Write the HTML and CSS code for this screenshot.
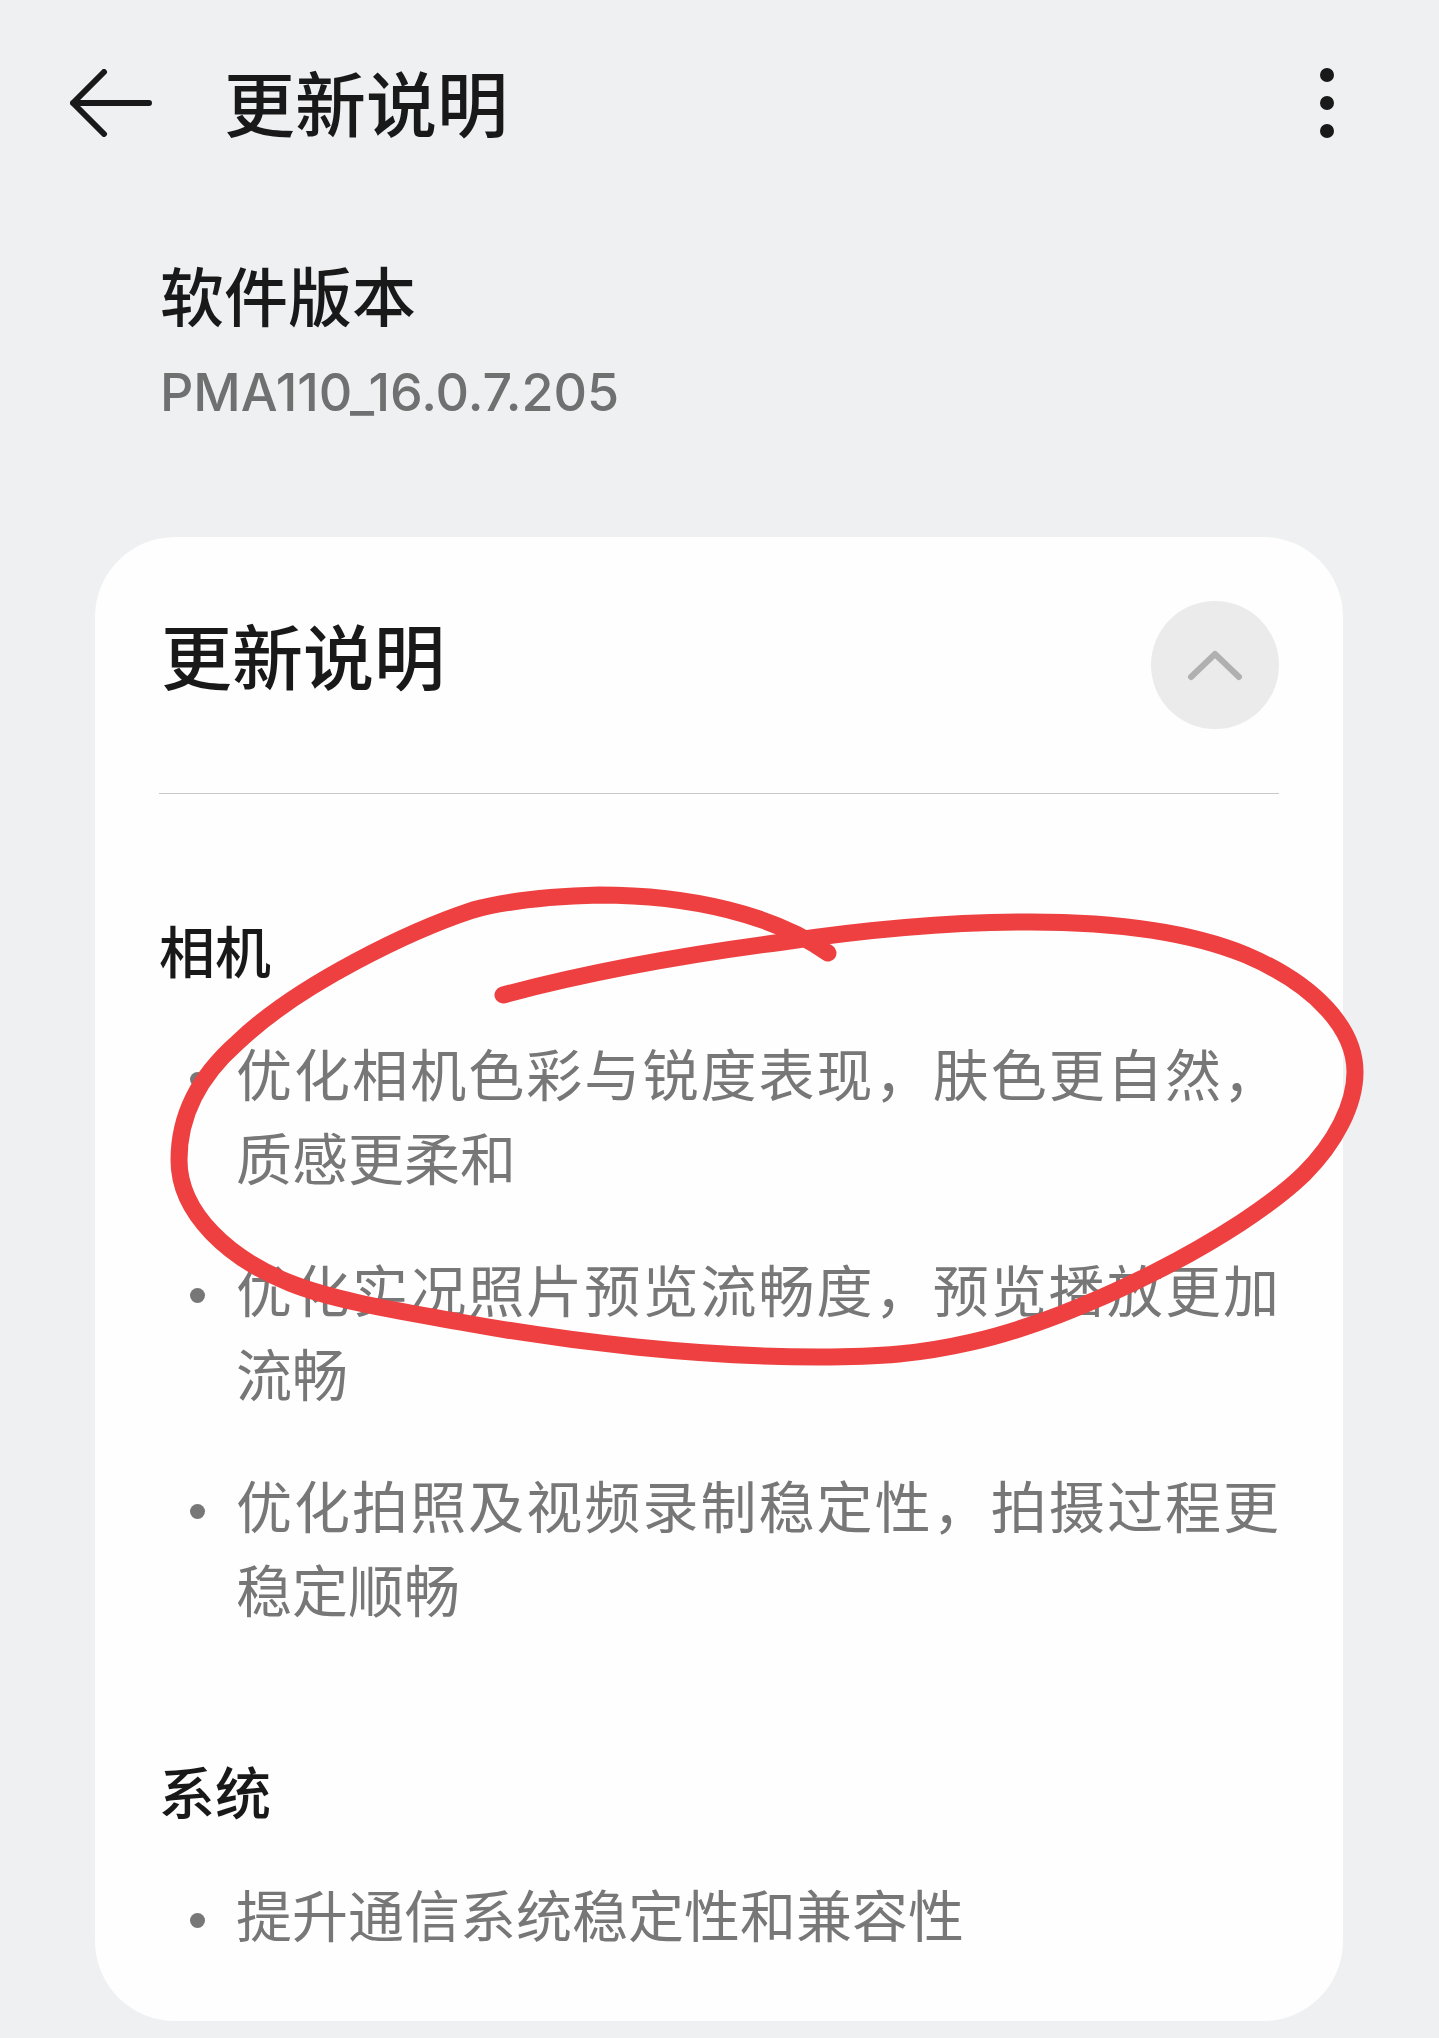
FILE: index.html
```html
<!DOCTYPE html>
<html lang="zh-CN">
<head>
  <meta charset="UTF-8" />
  <meta name="viewport" content="width=device-width, initial-scale=1.0"/>
  <title>更新说明</title>
  <link rel="stylesheet" href="styles.css">
</head>
<body>
  <header class="app-bar">
    <button class="icon-button" type="button" aria-label="返回">
      <svg class="icon-back" viewBox="0 0 82 68">
        <path d="M34 3L3 34L34 65M3 34H79" />
      </svg>
    </button>
    <h1>更新说明</h1>
    <button class="icon-button" type="button" aria-label="更多">
      <svg class="icon-more" viewBox="0 0 14 72">
        <circle cx="7" cy="8" r="7" />
        <circle cx="7" cy="36" r="7" />
        <circle cx="7" cy="64" r="7" />
      </svg>
    </button>
  </header>

  <main>
    <section class="version">
      <h2>软件版本</h2>
      <p>PMA110_16.0.7.205</p>
    </section>

    <article class="card">
      <div class="card-header">
        <h2>更新说明</h2>
        <button class="collapse-button" type="button" aria-label="收起">
          <svg viewBox="0 0 128 128">
            <path d="M40 76L64 53L88 76" />
          </svg>
        </button>
      </div>

      <section class="notes">
        <h3>相机</h3>
        <ul>
          <li>优化相机色彩与锐度表现，肤色更自然，质感更柔和</li>
          <li>优化实况照片预览流畅度，预览播放更加流畅</li>
          <li>优化拍照及视频录制稳定性，拍摄过程更稳定顺畅</li>
        </ul>
        <!-- hand-drawn circle over the first item -->
        <svg class="marker" viewBox="159 794 1120 841" preserveAspectRatio="none" aria-hidden="true">
          <path d="M503 995C600 969 698 953 783 942C870 929 950 922 1030 922C1115 922 1190 932 1246 955C1316 985 1355 1029 1355 1072C1355 1105 1335 1143 1304 1174C1240 1236 1080 1318 972 1342C920 1354 880 1357 819 1357C700 1357 570 1342 460 1322C400 1311 335 1301 290 1283C230 1259 179 1214 179 1160C179 1112 203 1073 237 1043C298 984 412 930 473 910C513 899 560 896 599 895C690 895 775 915 828 953" />
        </svg>
      </section>

      <section class="notes">
        <h3>系统</h3>
        <ul>
          <li>提升通信系统稳定性和兼容性</li>
        </ul>
      </section>
    </article>
  </main>
</body>
</html>
```
FILE: styles.css
```css
* {
  box-sizing: border-box;
}
body {
  margin: 0;
  background-color: #eff0f2;
  color: #191919;
  font-family: "Noto Sans CJK SC", sans-serif;
}
h1, h2, h3, p, ul {
  margin: 0;
  padding: 0;
}
h1, h2, h3 {
  font-weight: 500;
}
button {
  padding: 0;
  border: none;
  background: transparent;
  cursor: pointer;
}
svg {
  display: block;
}

/* Top bar */
.app-bar {
  display: flex;
  align-items: center;
  height: 206px;
  padding: 0 105px 0 70px;
}
.app-bar h1 {
  flex: 1;
  margin-left: 72px;
  padding-bottom: 6px;
  font-size: 71px;
  line-height: 104px;
}
.icon-back {
  width: 82px;
  height: 68px;
  fill: none;
  stroke: #191919;
  stroke-width: 6;
  stroke-linecap: round;
  stroke-linejoin: round;
}
.icon-more {
  width: 14px;
  height: 72px;
  fill: #191919;
}

/* Software version */
.version {
  padding: 47px 160px 112px;
}
.version h2 {
  font-size: 64px;
  line-height: 80px;
}
.version p {
  margin-top: 28px;
  color: #6f7171;
  font-family: Inter, "Noto Sans CJK SC", sans-serif;
  font-size: 52px;
  font-weight: 500;
  line-height: 64px;
}

/* Release notes card */
.card {
  margin: 0 96px 16px 95px;
  padding: 64px 64px 61px;
  background-color: #fefefe;
  border-radius: 80px;
}
.card-header {
  display: flex;
  justify-content: space-between;
  align-items: flex-start;
  padding-bottom: 64px;
  border-bottom: 1px solid #c9c9c9;
}
.card-header h2 {
  padding-left: 2px;
  font-size: 71px;
  line-height: 104px;
}
.collapse-button {
  width: 128px;
  height: 128px;
  border-radius: 50%;
  background-color: #ebebeb;
}
.collapse-button path {
  fill: none;
  stroke: #b0b0b0;
  stroke-width: 6;
  stroke-linecap: round;
  stroke-linejoin: round;
}
.notes {
  position: relative;
  padding: 113px 0 5px;
  font-size: 56px;
  line-height: 84px;
}
.notes h3 {
  font-size: 56px;
}
.notes ul {
  display: flex;
  flex-direction: column;
  gap: 48px;
  margin-top: 39px;
  list-style: none;
}
.notes li {
  display: flex;
  gap: 31px;
  padding-left: 31px;
  color: #777;
  text-align: justify;
  text-spacing-trim: space-all;
}
.notes li::before {
  content: "";
  flex: none;
  width: 15px;
  height: 15px;
  margin-top: 42px;
  border-radius: 50%;
  background-color: #777;
}
.marker {
  position: absolute;
  top: 0;
  left: 0;
  width: 100%;
  height: 100%;
  overflow: visible;
  pointer-events: none;
}
.marker path {
  fill: none;
  stroke: #ee4040;
  stroke-width: 17;
  stroke-linecap: round;
  stroke-linejoin: round;
}
```
